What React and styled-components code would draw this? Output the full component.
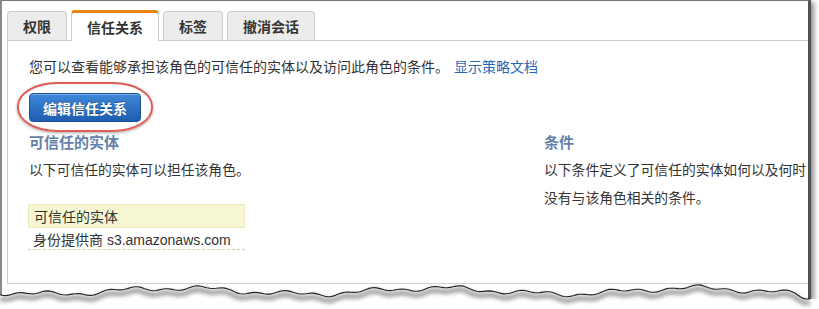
import React from 'react';
import styled, { createGlobalStyle } from 'styled-components';

const GlobalStyle = createGlobalStyle`
  html, body {
    margin: 0;
    padding: 0;
    background: #fff;
  }
  body {
    font-family: "Liberation Sans", "Noto Sans CJK SC", sans-serif;
    color: #333;
  }
`;

const tabs = ['权限', '信任关系', '标签', '撤消会话'];

const Page = styled.div`
  position: relative;
  width: 819px;
  height: 309px;
  overflow: hidden;
`;

const Frame = styled.div`
  box-sizing: border-box;
  width: 811px;
  height: 300px;
  border-top: 1px solid #777;
  border-left: 2px solid #8a8a8a;
  border-right: 3px solid #505050;
  box-shadow: 3px 2px 5px rgba(0, 0, 0, 0.45);
  padding: 9px 0 0 5px;
  overflow: hidden;
  background: #fff;
`;

const TabBar = styled.div`
  display: flex;
  align-items: flex-end;
  gap: 4px;
  height: 30px;
`;

const Tab = styled.div`
  position: relative;
  box-sizing: border-box;
  height: ${p => (p.$active ? '31px' : '29px')};
  margin-bottom: ${p => (p.$active ? '-1px' : '0')};
  padding: 0 15px;
  display: flex;
  align-items: center;
  font-size: 14px;
  font-weight: ${p => (p.$active ? 'bold' : '600')};
  color: #333;
  background: ${p => (p.$active ? '#fff' : '#ececec')};
  border: 1px solid #cdcdcd;
  border-top: ${p => (p.$active ? '3px solid #e8850c' : '1px solid #cdcdcd')};
  border-bottom: none;
  border-radius: 4px 4px 0 0;
  z-index: 1;
`;

const Panel = styled.div`
  box-sizing: border-box;
  width: 1100px;
  height: 244px;
  border: 1px solid #cdcdcd;
  padding: 16px 0 0 21px;
`;

const Intro = styled.p`
  margin: 0;
  font-size: 14px;
  line-height: 20px;
`;

const Link = styled.a`
  color: #2a66b8;
  text-decoration: none;
  margin-left: 5px;
`;

const Highlight = styled.div`
  display: inline-flex;
  margin: 5px 0 0 -12px;
  padding: 9px 10px 8px 10px;
  border: 2px solid #df5f58;
  border-radius: 40px / 24px;
  box-shadow: 0 1px 3px rgba(0, 0, 0, 0.35), inset 0 0 1px rgba(0, 0, 0, 0.15);
`;

const Button = styled.button`
  box-sizing: border-box;
  height: 29px;
  padding: 0 13px;
  font-family: inherit;
  font-size: 14px;
  font-weight: bold;
  color: #fff;
  text-shadow: 0 -1px 0 rgba(0, 0, 0, 0.35);
  background: linear-gradient(#3f88d9, #1f5db0);
  border: 1px solid #1b4f98;
  border-radius: 4px;
  box-shadow: inset 0 1px 0 rgba(255, 255, 255, 0.3);
`;

const Columns = styled.div`
  display: grid;
  grid-template-columns: 515px 1fr;
  margin-top: 1px;
`;

const Column = styled.div`
  display: flex;
  flex-direction: column;
  align-items: flex-start;
`;

const Heading = styled.h3`
  margin: 0 0 8px;
  font-size: 15px;
  line-height: 20px;
  font-weight: bold;
  color: #6581ab;
`;

const Text = styled.p`
  margin: 0 0 8px;
  font-size: 13.8px;
  line-height: 20px;
  white-space: nowrap;
`;

const Table = styled.div`
  margin-top: 15px;
  width: 217px;
  margin-left: -1px;
`;

const HeaderCell = styled.div`
  box-sizing: border-box;
  height: 24px;
  padding-left: 5px;
  display: flex;
  align-items: center;
  font-size: 14px;
  background: #f7f7d3;
  border: 1px solid #ebebbc;
`;

const Cell = styled.div`
  box-sizing: border-box;
  height: 22px;
  padding-left: 5px;
  display: flex;
  align-items: center;
  font-size: 14px;
  border-bottom: 1px dashed #cfcfa8;
`;

const Tear = styled.svg`
  position: absolute;
  left: 0;
  top: 279px;
`;

function tornPoints() {
  const pts = [];
  for (let x = 0; x <= 810; x += 3) {
    let y =
      12 +
      3 * Math.sin(x / 41 + 0.4) +
      1.9 * Math.sin(x / 13 + 1.3) +
      1.3 * Math.sin(x / 4.7 + 0.7);
    if (x > 795) y += (x - 795) * 0.35;
    pts.push([x, Math.max(4, Math.min(20, y))]);
  }
  return pts;
}

function TornEdge() {
  const pts = tornPoints();
  const line = pts.map((p, i) => `${i ? 'L' : 'M'}${p[0]},${p[1].toFixed(1)}`).join(' ');
  const last = pts[pts.length - 1];
  const fill = `${line} L819,${last[1].toFixed(1)} L819,30 L0,30 Z`;
  return (
    <Tear width="819" height="30" viewBox="0 0 819 30">
      <defs>
        <filter id="blur" x="-5%" y="-50%" width="110%" height="200%">
          <feGaussianBlur stdDeviation="2.2" />
        </filter>
      </defs>
      <path d={fill} fill="#fff" />
      <path
        d={line}
        transform="translate(0 4)"
        fill="none"
        stroke="#000"
        strokeOpacity="0.45"
        strokeWidth="4"
        filter="url(#blur)"
      />
      <path d={line} fill="none" stroke="#222" strokeWidth="1.1" />
    </Tear>
  );
}

export default function App() {
  return (
    <>
      <GlobalStyle />
      <Page>
        <Frame>
          <TabBar>
            {tabs.map(t => (
              <Tab key={t} $active={t === '信任关系'}>
                {t}
              </Tab>
            ))}
          </TabBar>
          <Panel>
            <Intro>
              您可以查看能够承担该角色的可信任的实体以及访问此角色的条件。
              <Link href="#">显示策略文档</Link>
            </Intro>
            <Highlight>
              <Button>编辑信任关系</Button>
            </Highlight>
            <Columns>
              <Column>
                <Heading>可信任的实体</Heading>
                <Text>以下可信任的实体可以担任该角色。</Text>
                <Table>
                  <HeaderCell>可信任的实体</HeaderCell>
                  <Cell>身份提供商 s3.amazonaws.com</Cell>
                </Table>
              </Column>
              <Column>
                <Heading>条件</Heading>
                <Text>以下条件定义了可信任的实体如何以及何时</Text>
                <Text>没有与该角色相关的条件。</Text>
              </Column>
            </Columns>
          </Panel>
        </Frame>
        <TornEdge />
      </Page>
    </>
  );
}
